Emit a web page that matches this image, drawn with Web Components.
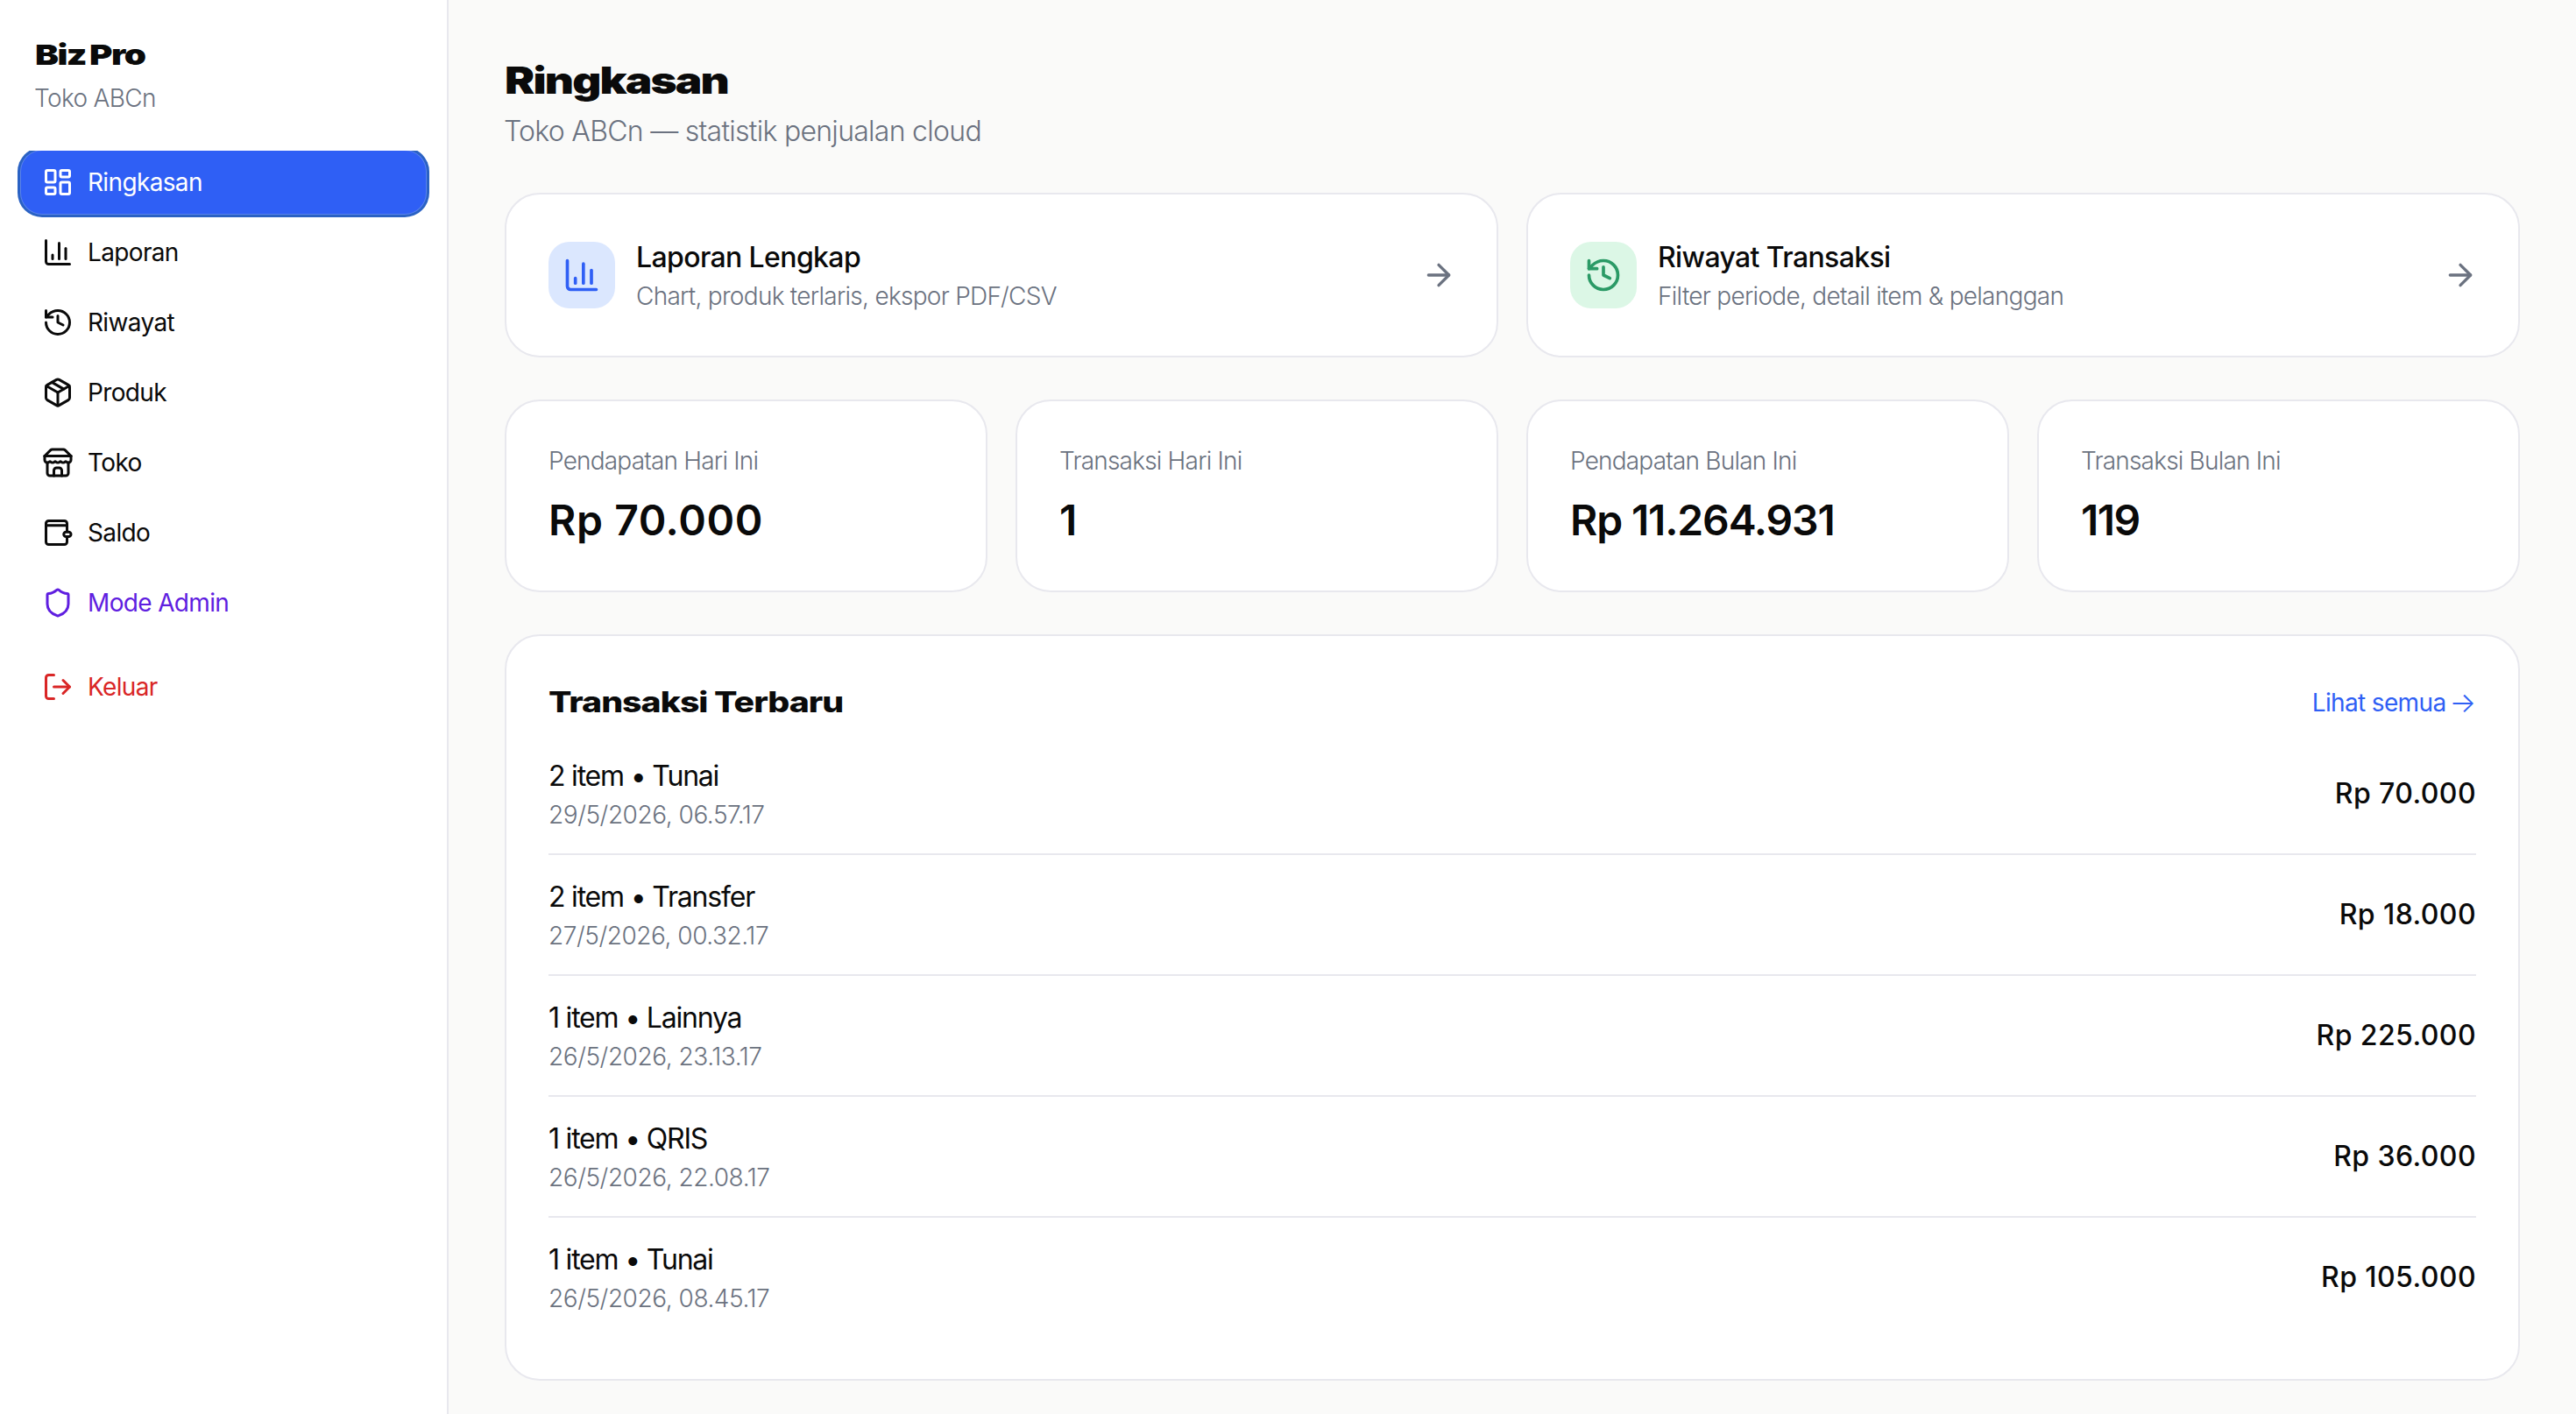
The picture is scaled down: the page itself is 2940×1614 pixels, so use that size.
<!DOCTYPE html>
<html lang="id">
<head>
<meta charset="utf-8">
<title>Biz Pro</title>
<style>
  html, body { margin: 0; height: 100%; }
  body { font-family: "Inter", "Liberation Sans", sans-serif; color: #0a0a0a; background: #fafaf9; overflow: hidden; }
  biz-app { height: 100vh; }
</style>
</head>
<body>
<biz-app>
  <biz-sidebar slot="side" brand="Biz Pro" store="Toko ABCn">
    <nav-item icon="dashboard" active>Ringkasan</nav-item>
    <nav-item icon="chart">Laporan</nav-item>
    <nav-item icon="history">Riwayat</nav-item>
    <nav-item icon="package">Produk</nav-item>
    <nav-item icon="store">Toko</nav-item>
    <nav-item icon="wallet">Saldo</nav-item>
    <nav-item icon="shield" tone="admin">Mode Admin</nav-item>
    <nav-item icon="logout" tone="danger" separated>Keluar</nav-item>
  </biz-sidebar>
  <page-header heading="Ringkasan" sub="Toko ABCn — statistik penjualan cloud"></page-header>
  <card-grid cols="2">
    <action-card icon="chart" tone="blue" heading="Laporan Lengkap" sub="Chart, produk terlaris, ekspor PDF/CSV"></action-card>
    <action-card icon="history" tone="green" heading="Riwayat Transaksi" sub="Filter periode, detail item &amp; pelanggan"></action-card>
  </card-grid>
  <card-grid cols="4">
    <stat-card label="Pendapatan Hari Ini" value="Rp 70.000" style="--ls:.6px"></stat-card>
    <stat-card label="Transaksi Hari Ini" value="1"></stat-card>
    <stat-card label="Pendapatan Bulan Ini" value="Rp 11.264.931" style="--ls:-1.15px"></stat-card>
    <stat-card label="Transaksi Bulan Ini" value="119" style="--ls:-1.6px"></stat-card>
  </card-grid>
  <tx-card heading="Transaksi Terbaru" link="Lihat semua" arrow="→">
    <tx-row heading="2 item • Tunai" date="29/5/2026, 06.57.17" amount="Rp 70.000"></tx-row>
    <tx-row heading="2 item • Transfer" date="27/5/2026, 00.32.17" amount="Rp 18.000"></tx-row>
    <tx-row heading="1 item • Lainnya" date="26/5/2026, 23.13.17" amount="Rp 225.000"></tx-row>
    <tx-row heading="1 item • QRIS" date="26/5/2026, 22.08.17" amount="Rp 36.000"></tx-row>
    <tx-row heading="1 item • Tunai" date="26/5/2026, 08.45.17" amount="Rp 105.000"></tx-row>
  </tx-card>
</biz-app>
<script>
const ICONS = {
  dashboard: '<rect x="3" y="3" width="7" height="9" rx="1"/><rect x="14" y="3" width="7" height="5" rx="1"/><rect x="14" y="12" width="7" height="9" rx="1"/><rect x="3" y="16" width="7" height="5" rx="1"/>',
  chart: '<path d="M3 3v16a2 2 0 0 0 2 2h16"/><path d="M18 17V9"/><path d="M13 17V5"/><path d="M8 17v-3"/>',
  history: '<path d="M3 12a9 9 0 1 0 9-9 9.75 9.75 0 0 0-6.74 2.74L3 8"/><path d="M3 3v5h5"/><path d="M12 7v5l4 2"/>',
  package: '<path d="M11 21.73a2 2 0 0 0 2 0l7-4A2 2 0 0 0 21 16V8a2 2 0 0 0-1-1.73l-7-4a2 2 0 0 0-2 0l-7 4A2 2 0 0 0 3 8v8a2 2 0 0 0 1 1.73z"/><path d="M12 22V12"/><path d="m3.3 7 8.7 5 8.7-5"/><path d="m7.5 4.27 9 5.15"/>',
  store: '<path d="m2 7 4.41-4.41A2 2 0 0 1 7.83 2h8.34a2 2 0 0 1 1.42.59L22 7"/><path d="M4 12v8a2 2 0 0 0 2 2h12a2 2 0 0 0 2-2v-8"/><path d="M15 22v-4a2 2 0 0 0-2-2h-2a2 2 0 0 0-2 2v4"/><path d="M2 7h20"/><path d="M22 7v3a2 2 0 0 1-2 2a2.7 2.7 0 0 1-1.59-.63.7.7 0 0 0-.82 0A2.7 2.7 0 0 1 16 12a2.7 2.7 0 0 1-1.59-.63.7.7 0 0 0-.82 0A2.7 2.7 0 0 1 12 12a2.7 2.7 0 0 1-1.59-.63.7.7 0 0 0-.82 0A2.7 2.7 0 0 1 8 12a2.7 2.7 0 0 1-1.59-.63.7.7 0 0 0-.82 0A2.7 2.7 0 0 1 4 12a2 2 0 0 1-2-2V7"/>',
  wallet: '<path d="M3 5a2 2 0 0 1 2-2h12a2 2 0 0 1 2 2v6"/><path d="M3 5v14a2 2 0 0 0 2 2h12a2 2 0 0 0 2-2v-4"/><path d="M3 6.5h16"/><rect x="16.5" y="11.5" width="5.5" height="3.5" rx="1.75"/>',
  shield: '<path d="M20 13c0 5-3.5 7.5-7.66 8.95a1 1 0 0 1-.67-.01C7.5 20.5 4 18 4 13V6a1 1 0 0 1 1-1c2 0 4.5-1.2 6.24-2.72a1.17 1.17 0 0 1 1.52 0C14.51 3.81 17 5 19 5a1 1 0 0 1 1 1z"/>',
  logout: '<path d="M9 21H5a2 2 0 0 1-2-2V5a2 2 0 0 1 2-2h4"/><path d="m16 17 5-5-5-5"/><path d="M21 12H9"/>',
  arrow: '<path d="M5 12h14"/><path d="m12 5 7 7-7 7"/>'
};
const icon = (name, size) => `<svg xmlns="http://www.w3.org/2000/svg" width="${size}" height="${size}" viewBox="0 0 24 24" fill="none" stroke="currentColor" stroke-width="2" stroke-linecap="round" stroke-linejoin="round" aria-hidden="true">${ICONS[name]}</svg>`;
const esc = s => String(s == null ? '' : s).replace(/&/g, '&amp;').replace(/</g, '&lt;');

class Base extends HTMLElement {
  constructor() { super(); this.attachShadow({ mode: 'open' }); }
  connectedCallback() { this.shadowRoot.innerHTML = this.render(); }
  a(n) { return esc(this.getAttribute(n)); }
}

customElements.define('biz-app', class extends Base {
  render() { return `<style>
    :host { display: grid; grid-template-columns: 512px 1fr; box-sizing: border-box; }
    main { padding: 64px 64px 0; display: flex; flex-direction: column; gap: 48px; min-width: 0; }
  </style>
  <slot name="side"></slot>
  <main><slot></slot></main>`; }
});

customElements.define('biz-sidebar', class extends Base {
  render() { return `<style>
    :host { display: flex; flex-direction: column; box-sizing: border-box; width: 512px; height: 100%; background: #fff; border-right: 2px solid #e8e8ee; }
    header { padding: 41px 40px 0; height: 132px; box-sizing: border-box; }
    .brand { font: 900 32px/44px "Inter", sans-serif; letter-spacing: -1.2px; word-spacing: -2px; color: #0a0a0a; transform: scaleX(1.26); transform-origin: left center; width: max-content; }
    .store { font: 300 28px/40px "Inter", sans-serif; letter-spacing: -.65px; color: #6b7280; margin: 7px 0 0 -1px; }
    nav { margin-top: 40px; padding: 0 24px 8px; display: flex; flex-direction: column; gap: 8px; overflow: hidden; flex: 1; }
  </style>
  <header><div class="brand">${this.a('brand')}</div><div class="store">${this.a('store')}</div></header>
  <nav><slot></slot></nav>`; }
});

customElements.define('nav-item', class extends Base {
  render() {
    const active = this.hasAttribute('active');
    const tone = this.getAttribute('tone');
    const color = active ? '#fff' : tone === 'admin' ? '#5f1ee0' : tone === 'danger' ? '#d92626' : '#0a0a0a';
    return `<style>
    :host { display: flex; align-items: center; gap: 16px; height: 72px; padding: 0 24px; box-sizing: border-box; border-radius: 24px;
      font: 400 28px/40px "Inter", sans-serif; letter-spacing: -.65px; color: ${color};
      ${active ? 'background: #2f5ff5; box-shadow: 0 0 0 1px #5a82ee, 0 0 0 4px #2a62c4;' : ''}
      ${this.hasAttribute('separated') ? 'margin-top: 16px;' : ''} }
    svg { flex: none; display: block; }
  </style>${icon(this.getAttribute('icon'), 36)}<span><slot></slot></span>`;
  }
});

customElements.define('page-header', class extends Base {
  render() { return `<style>
    :host { display: block; height: 108px; }
    h1 { margin: 0; font: 900 42px/56px "Inter", sans-serif; letter-spacing: -1.5px; color: #0a0a0a; transform: scaleX(1.22); transform-origin: left center; width: max-content; }
    p { margin: 8px 0 0 -1px; font: 300 32px/44px "Inter", sans-serif; letter-spacing: -.72px; color: #6b7280; }
  </style><h1>${this.a('heading')}</h1><p>${this.a('sub')}</p>`; }
});

customElements.define('card-grid', class extends Base {
  render() { return `<style>
    :host { display: grid; grid-template-columns: repeat(${this.getAttribute('cols')}, minmax(0, 1fr)); gap: 32px; }
  </style><slot></slot>`; }
});

customElements.define('action-card', class extends Base {
  render() {
    const tones = { blue: ['#dbe7fe', '#2f5ff5'], green: ['#dcf7e6', '#2b9a66'] };
    const [bg, fg] = tones[this.getAttribute('tone')];
    return `<style>
    :host { display: flex; align-items: center; gap: 24px; box-sizing: border-box; height: 188px; padding: 48px; background: #fff; border: 2px solid #e8e8ee; border-radius: 40px; }
    .ico { flex: none; width: 76px; height: 76px; border-radius: 24px; background: ${bg}; color: ${fg}; display: grid; place-items: center; }
    .txt { flex: 1; min-width: 0; }
    .t { font: 500 32px/48px "Inter", sans-serif; letter-spacing: -.62px; color: #0a0a0a; }
    .s { font: 300 28px/40px "Inter", sans-serif; letter-spacing: -.72px; color: #6b7280; }
    .arr { flex: none; color: #6b7280; display: block; margin-right: -2px; }
    svg { display: block; }
  </style>
  <div class="ico">${icon(this.getAttribute('icon'), 44)}</div>
  <div class="txt"><div class="t">${this.a('heading')}</div><div class="s">${this.a('sub')}</div></div>
  <div class="arr">${icon('arrow', 40)}</div>`;
  }
});

customElements.define('stat-card', class extends Base {
  render() { return `<style>
    :host { display: block; box-sizing: border-box; height: 220px; padding: 48px; background: #fff; border: 2px solid #e8e8ee; border-radius: 40px; }
    .l { font: 300 28px/40px "Inter", sans-serif; letter-spacing: -.8px; color: #6b7280; }
    .v { margin-top: 16px; font: 600 48px/64px "Inter", sans-serif; letter-spacing: var(--ls, 0); color: #0a0a0a; }
  </style><div class="l">${this.a('label')}</div><div class="v">${this.a('value')}</div>`; }
});

customElements.define('tx-card', class extends Base {
  render() { return `<style>
    :host { display: block; box-sizing: border-box; padding: 48px; background: #fff; border: 2px solid #e8e8ee; border-radius: 40px; }
    .h { display: flex; justify-content: space-between; align-items: center; height: 56px; margin-bottom: 8px; }
    h2 { margin: 0; font: 800 32px/56px "Inter", sans-serif; letter-spacing: -.8px; color: #0a0a0a; transform: scaleX(1.225); transform-origin: left center; }
    a { font: 400 28px/40px "Inter", sans-serif; letter-spacing: -.65px; color: #2f5ff5; text-decoration: none; display: flex; align-items: center; gap: 4px; }
    a span { font: 300 32px/40px "Inter", sans-serif; letter-spacing: 0; }
  </style>
  <div class="h"><h2>${this.a('heading')}</h2><a href="#">${this.a('link')}<span>${this.a('arrow')}</span></a></div>
  <slot></slot>`; }
});

customElements.define('tx-row', class extends Base {
  render() { return `<style>
    :host { display: flex; justify-content: space-between; align-items: center; padding: 24px 0; border-bottom: 2px solid #e8e8ee; }
    :host(:last-child) { border-bottom: 0; }
    .t { font: 400 32px/48px "Inter", sans-serif; letter-spacing: -1.2px; color: #0a0a0a; }
    .d { font: 300 28px/40px "Inter", sans-serif; letter-spacing: -.45px; color: #6b7280; }
    .a { font: 550 32px/48px "Inter", sans-serif; letter-spacing: .42px; color: #0a0a0a; }
  </style><div><div class="t">${this.a('heading')}</div><div class="d">${this.a('date')}</div></div><div class="a">${this.a('amount')}</div>`; }
});
</script>
</body>
</html>
